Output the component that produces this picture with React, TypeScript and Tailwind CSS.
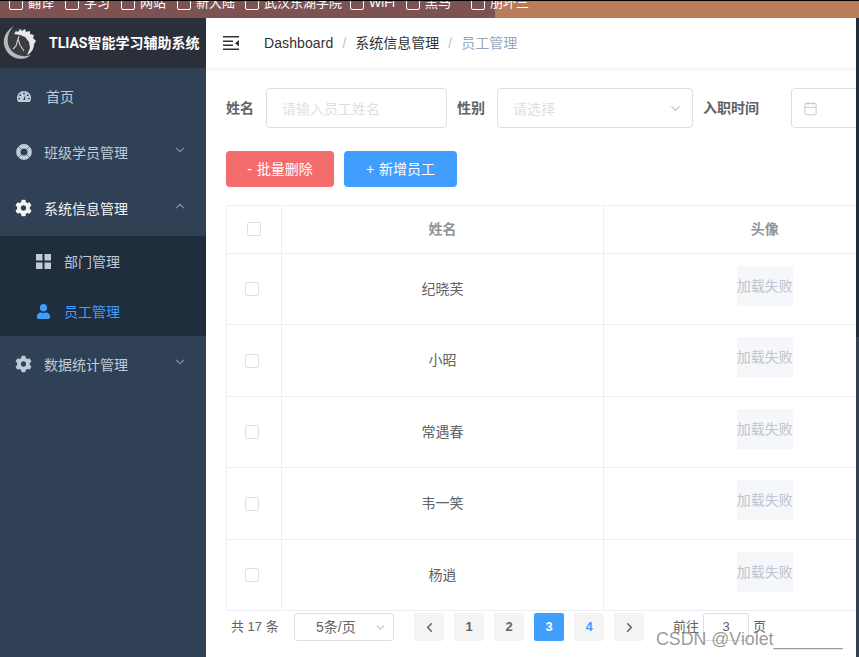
import { Calendar, ChevronDown, ChevronLeft, ChevronRight, ChevronUp } from "lucide-react";
import { FaCog, FaUser } from "react-icons/fa";

const bookmarks = [
  { label: "翻译", width: "w-[56px]" },
  { label: "学习", width: "w-[56px]" },
  { label: "网站", width: "w-[56px]" },
  { label: "新大陆", width: "w-[68px]" },
  { label: "武汉东湖学院", width: "w-[105px]" },
  { label: "WiFi", width: "w-[56px]" },
  { label: "黑马", width: "w-[65px]" },
  { label: "朋坏三", width: "w-[68px]" },
];
const employees = ["纪晓芙", "小昭", "常遇春", "韦一笑", "杨逍"];

function Logo() {
  return (
    <svg width="34" height="34" viewBox="0 0 34 34">
      <circle cx="17" cy="17" r="15" fill="#3a3c42" />
      {/* crescent on the left and bottom */}
      <path d="M11 0 C2 5 -2 15 3 24 C8 33 20 36 28 29 C20 32 10 29 6 21 C3 14 5 6 11 0Z" fill="#b9b9b9" />
      {/* bright body with the spiky back of the dragon */}
      <path d="M11 8 L13 5 L15 6 L17 3 L19 5 L22 3 L23 6 L27 5 L27 8 L31 9 L30 12 L33 15 L31 18 C31 23 28 27 24 29 L27 22 L26 16 L22 11 L17 9Z" fill="#e8e8e8" />
      <path d="M15 13 L17 19 L21 25 M15 13 L13 20 L10 23 M15 13 L16 10" stroke="#d0d0d0" strokeWidth="1.1" fill="none" />
    </svg>
  );
}

function GaugeIcon() {
  return (
    <svg width="14" height="11" viewBox="0 0 14 11" fill="#bfcbd9">
      <path d="M7 0 C3 0 0 3 0 7 C0 8.6 .5 9.9 1.2 11 H12.8 C13.5 9.9 14 8.6 14 7 C14 3 11 0 7 0Z" />
      <circle cx="7" cy="2.4" r=".9" fill="#304156" />
      <circle cx="3.2" cy="4.2" r=".9" fill="#304156" />
      <circle cx="10.8" cy="4.2" r=".9" fill="#304156" />
      <circle cx="2.2" cy="7.6" r=".9" fill="#304156" />
      <circle cx="11.8" cy="7.6" r=".9" fill="#304156" />
      <path d="M6.2 9 L8.2 4 L8.2 9Z" fill="#304156" />
    </svg>
  );
}

function RingIcon() {
  return (
    <svg width="16" height="16" viewBox="0 0 16 16" fill="none">
      <circle cx="8" cy="8" r="5.7" stroke="#bfcbd9" strokeWidth="4.4" />
      <path d="M2.3 2.3 L5.4 5.4 M13.7 2.3 L10.6 5.4 M2.3 13.7 L5.4 10.6 M13.7 13.7 L10.6 10.6" stroke="#304156" strokeOpacity="0.55" strokeWidth="1" />
    </svg>
  );
}

function FoldIcon() {
  return (
    <svg width="16" height="14" viewBox="0 0 16 14" fill="#303133">
      <rect x="0" y="0" width="16" height="1.5" />
      <rect x="0" y="4.5" width="10" height="1.5" />
      <rect x="0" y="8.5" width="10" height="1.5" />
      <rect x="0" y="12.5" width="16" height="1.5" />
      <path d="M16 4 L12 7.2 L16 10.5Z" />
    </svg>
  );
}

function GridIcon() {
  return (
    <svg width="15" height="15" viewBox="0 0 15 15" fill="#bfcbd9">
      <rect x="0" y="0" width="6.5" height="6.5" />
      <rect x="8.5" y="0" width="6.5" height="6.5" />
      <rect x="0" y="8.5" width="6.5" height="6.5" />
      <rect x="8.5" y="8.5" width="6.5" height="6.5" />
    </svg>
  );
}

function Checkbox({ className }: { className: string }) {
  return <span className={`block h-[14px] w-[14px] rounded-[2px] border border-[#dcdfe6] bg-white ${className}`} />;
}

function MenuItem(props: { icon: React.ReactNode; label: string; open?: boolean; active?: boolean; gap: string }) {
  return (
    <div className={`flex h-14 items-center pl-[15px] ${props.gap} text-sm ${props.active ? "text-[#f4f4f5]" : "text-[#bfcbd9]"}`}>
      <span className="flex w-[17px] justify-center">{props.icon}</span>
      <span className="flex-1 pt-[2px]">{props.label}</span>
      {props.open === undefined ? null : props.open ? (
        <ChevronUp size={14} className="mr-[19px] -mt-1 text-[#7d8a99]" />
      ) : (
        <ChevronDown size={14} className="mr-[19px] -mt-1 text-[#7d8a99]" />
      )}
    </div>
  );
}

function PageButton({ children, className }: { children: React.ReactNode; className?: string }) {
  return (
    <span className={`flex h-7 w-[30px] items-center justify-center rounded-[2px] text-[13px] font-bold ${className ?? "bg-[#f4f4f5] text-[#606266]"}`}>
      {children}
    </span>
  );
}

export default function App() {
  return (
    <div className="relative flex h-[657px] w-[859px] flex-col overflow-hidden bg-white [font-family:'Liberation_Sans','Noto_Sans_CJK_SC',sans-serif]">
      <div className="flex h-[18px] flex-none overflow-hidden border-t border-black bg-[linear-gradient(90deg,#7d5252_495px,#b97b59_495px)] pl-[9px] text-[13px] leading-[14px] text-white">
        {bookmarks.map((b) => (
          <div key={b.label} className={`-mt-[5px] flex h-[14px] flex-none items-center gap-[5px] ${b.width}`}>
            <span className="h-[13px] w-[14px] rounded-[2px] border border-white" />
            <span>{b.label}</span>
          </div>
        ))}
      </div>

      <div className="flex min-h-0 flex-1">
        <aside className="flex w-[206px] flex-none flex-col bg-[#304156]">
          <div className="flex h-[50px] flex-none items-center gap-[12px] bg-[#2b2f3a] pl-[3px]">
            <Logo />
            <span className="text-[14px] font-bold whitespace-nowrap text-white">
              <span className="[font-family:Roboto,sans-serif]">TLIAS</span>智能学习辅助系统
            </span>
          </div>
          <MenuItem icon={<GaugeIcon />} label="首页" gap="gap-[14px]" />
          <MenuItem icon={<RingIcon />} label="班级学员管理" open={false} gap="gap-[12px]" />
          <MenuItem icon={<FaCog size={18} />} label="系统信息管理" open active gap="gap-[12px]" />
          <div className="bg-[#1f2d3d] text-sm">
            <div className="flex h-[50px] items-center gap-[13px] pl-9 text-[#bfcbd9]">
              <GridIcon />
              <span className="pt-[2px]">部门管理</span>
            </div>
            <div className="flex h-[50px] items-center gap-[13px] pl-9 text-[#409eff]">
              <FaUser size={15} />
              <span className="pt-[2px]">员工管理</span>
            </div>
          </div>
          <MenuItem icon={<FaCog size={18} />} label="数据统计管理" open={false} gap="gap-[12px]" />
        </aside>

        <main className="min-w-0 flex-1 overflow-hidden">
          <div className="flex h-[50px] items-center gap-[25px] pl-[17px] shadow-[0_1px_4px_rgba(0,21,41,0.08)]">
            <FoldIcon />
            <div className="flex items-center gap-[9px] text-sm text-[#303133]">
              <span className="tracking-[0.1px]">Dashboard</span>
              <span className="text-[#c0c4cc]">/</span>
              <span>系统信息管理</span>
              <span className="text-[#c0c4cc]">/</span>
              <span className="text-[#97a8be]">员工管理</span>
            </div>
          </div>

          <div className="pt-5 pl-5">
            <div className="flex h-10 items-center text-sm">
              <span className="w-10 flex-none font-bold text-[#606266]">姓名</span>
              <span className="flex h-10 w-[181px] flex-none items-center rounded border border-[#dcdfe6] pt-[2px] pl-[15px] text-[#dcdfe6]">请输入员工姓名</span>
              <span className="ml-[10px] w-10 flex-none font-bold text-[#606266]">性别</span>
              <span className="flex h-10 w-[196px] flex-none items-center justify-between rounded border border-[#dcdfe6] pr-[9px] pl-[15px] text-[#dcdfe6]">
                <span className="pt-[2px]">请选择</span>
                <ChevronDown size={15} className="text-[#c0c4cc]" />
              </span>
              <span className="ml-[10px] w-[88px] flex-none font-bold text-[#606266]">入职时间</span>
              <span className="flex h-10 w-[220px] flex-none items-center rounded border border-[#dcdfe6] pl-[11px]">
                <Calendar size={15} strokeWidth={1.5} className="text-[#c0c4cc]" />
              </span>
            </div>

            <div className="mt-[23px] flex gap-[10px] text-sm text-white">
              <span className="flex h-9 w-[108px] items-center justify-center rounded bg-[#f56c6c]">
                <span className="mr-[5px]">-</span>批量删除
              </span>
              <span className="flex h-9 w-[113px] items-center justify-center rounded bg-[#409eff]">
                <span className="mr-[5px]">+</span>新增员工
              </span>
            </div>

            <table className="mt-[18px] w-[701px] table-fixed border-t border-l border-[#ebeef5] text-sm text-[#606266]">
              <colgroup>
                <col className="w-[55px]" />
                <col className="w-[322px]" />
                <col className="w-[324px]" />
              </colgroup>
              <thead>
                <tr className="h-[47.5px] border-b border-[#ebeef5] font-bold text-[#909399]">
                  <th className="border-r border-[#ebeef5]">
                    <Checkbox className="ml-5" />
                  </th>
                  <th className="border-r border-[#ebeef5] font-bold">姓名</th>
                  <th className="pr-[2px] font-bold">头像</th>
                </tr>
              </thead>
              <tbody>
                {employees.map((name) => (
                  <tr key={name} className="h-[71.5px] border-b border-[#ebeef5]">
                    <td className="border-r border-[#ebeef5] pt-[1px]">
                      <Checkbox className="ml-[18px]" />
                    </td>
                    <td className="border-r border-[#ebeef5] text-center">{name}</td>
                    <td className="pt-[1px] pr-[2px]">
                      <div className="mx-auto -mt-[7px] flex h-10 w-14 items-center justify-center bg-[#f5f7fa] whitespace-nowrap text-[#c0c4cc]">加载失败</div>
                    </td>
                  </tr>
                ))}
              </tbody>
            </table>

            <div className="mt-[2px] flex h-7 items-center text-[13px] text-[#606266]">
              <span className="ml-[5px] w-[63px] flex-none">共 17 条</span>
              <span className="flex h-7 w-[100px] flex-none items-center justify-between rounded-[3px] border border-[#dcdfe6] pr-[6px] pl-[21px]">
                <span className="text-sm">5条/页</span>
                <ChevronDown size={13} className="text-[#c0c4cc]" />
              </span>
              <div className="ml-5 flex flex-none gap-[10px]">
                <PageButton><ChevronLeft size={15} strokeWidth={2.5} /></PageButton>
                <PageButton>1</PageButton>
                <PageButton>2</PageButton>
                <PageButton className="bg-[#409eff] text-white">3</PageButton>
                <PageButton className="bg-[#f4f4f5] text-[#409eff]">4</PageButton>
                <PageButton><ChevronRight size={15} strokeWidth={2.5} /></PageButton>
              </div>
              <span className="ml-[29px] w-[30px] flex-none">前往</span>
              <span className="flex h-7 w-[46px] flex-none items-center justify-center rounded-[3px] border border-[#dcdfe6]">3</span>
              <span className="ml-1 flex-none">页</span>
            </div>
          </div>
        </main>

        <div className="flex w-[3px] flex-none flex-col">
          <div className="h-[319px] bg-[#1f2d3d]" />
          <div className="flex-1 bg-[#304156]" />
        </div>
      </div>

      <span className="absolute top-[628px] left-[656px] text-[17.8px] leading-[22px] whitespace-nowrap text-[#7f7f7f]/80">CSDN @Violet_______</span>
    </div>
  );
}
